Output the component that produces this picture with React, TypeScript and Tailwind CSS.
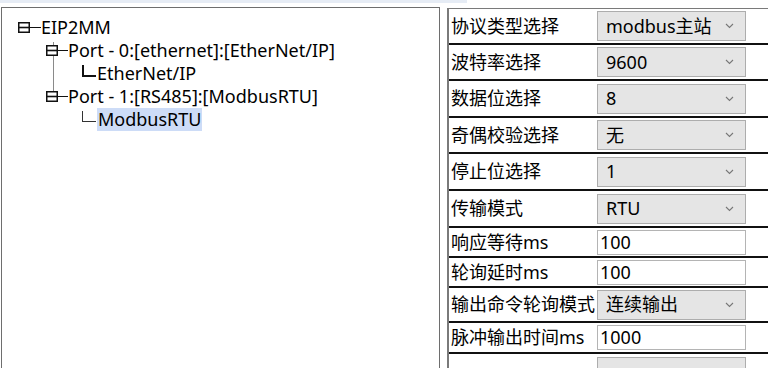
import React from "react";

const font = "font-['Noto_Sans','Noto_Sans_CJK_SC',sans-serif]";

// 树节点前的折叠框
function Box() {
  return (
    <svg width="12" height="11" viewBox="0 0 12 11" className="shrink-0">
      <rect x="0.75" y="0.75" width="10.5" height="9.5" fill="white" stroke="#111" strokeWidth="1.5" />
      <line x1="0" y1="5.5" x2="12" y2="5.5" stroke="#111" strokeWidth="1.6" />
    </svg>
  );
}

function Chevron() {
  return (
    <svg width="9" height="6" viewBox="0 0 9 6" className="shrink-0">
      <path d="M1 1 L4.5 4.5 L8 1" fill="none" stroke="#777" strokeWidth="1.1" />
    </svg>
  );
}

type Row = { label: string; value: string; kind: "combo" | "text"; h: string };

const rows: Row[] = [
  { label: "协议类型选择", value: "modbus主站", kind: "combo", h: "h-[36px]" },
  { label: "波特率选择", value: "9600", kind: "combo", h: "h-[36px]" },
  { label: "数据位选择", value: "8", kind: "combo", h: "h-[37px]" },
  { label: "奇偶校验选择", value: "无", kind: "combo", h: "h-[36px]" },
  { label: "停止位选择", value: "1", kind: "combo", h: "h-[37px]" },
  { label: "传输模式", value: "RTU", kind: "combo", h: "h-[37px]" },
  { label: "响应等待ms", value: "100", kind: "text", h: "h-[30px]" },
  { label: "轮询延时ms", value: "100", kind: "text", h: "h-[30px]" },
  { label: "输出命令轮询模式", value: "连续输出", kind: "combo", h: "h-[35px]" },
  { label: "脉冲输出时间ms", value: "1000", kind: "text", h: "h-[31px]" },
];

export default function App() {
  return (
    <div className={`w-[768px] h-[368px] overflow-hidden bg-white text-black ${font}`}>
      {/* 顶部残留的条 */}
      <div className="h-[7px] flex items-start">
        <div className="w-[467px] h-[3px] bg-[#e6ecf5]" />
      </div>

      <div className="flex h-[361px]">
        {/* 左侧树 */}
        <div className="ml-px w-[439px] h-[400px] border border-[#6e6e6e] bg-white pt-[8px] text-[18px] leading-[23px]">
          <div className="flex items-center pl-[16px] h-[23px]">
            <Box />
            <div className="w-[11px] h-[1.5px] bg-[#111]" />
            <span>EIP2MM</span>
          </div>
          <div className="relative">
            {/* 同级连接竖线 */}
            <div className="absolute left-[51px] top-[3px] w-px h-[55px] bg-[#8a8a8a]" />
            <div className="relative flex items-center pl-[44px] h-[23px]">
              <Box />
              <div className="w-[10px] h-[1.5px] bg-[#111]" />
              <span>Port - 0:[ethernet]:[EtherNet/IP]</span>
            </div>
            <div className="flex items-center pl-[80px] h-[23px]">
              <div className="w-[14px] h-[12px] border-l-2 border-b-2 border-[#111] -mt-[6px] mr-[1px]" />
              <span>EtherNet/IP</span>
            </div>
            <div className="relative flex items-center pl-[44px] h-[23px]">
              <Box />
              <div className="w-[10px] h-[1.5px] bg-[#111]" />
              <span>Port - 1:[RS485]:[ModbusRTU]</span>
            </div>
            <div className="flex items-center pl-[80px] h-[23px]">
              <div className="w-[14px] h-[11px] border-l border-b border-[#333] -mt-[6px] mr-[1px]" />
              <span className="bg-[#cddcf7] px-[1px]">ModbusRTU</span>
            </div>
          </div>
        </div>

        {/* 右侧参数表 */}
        <div className="ml-[7px] mt-px flex-1 border-l-2 border-t border-[#7a7a7a] text-[18px]">
          {rows.map((r) => (
            <div key={r.label} className={`flex items-center border-b-2 border-[#111] ${r.h}`}>
              <div className="w-[148px] pl-[2px] whitespace-nowrap">{r.label}</div>
              {r.kind === "combo" ? (
                <div className="w-[149px] h-[30px] flex items-center justify-between bg-[#e5e5e5] border border-[#adadad] pl-[8px] pr-[11px]">
                  <span>{r.value}</span>
                  <Chevron />
                </div>
              ) : (
                <div className="w-[149px] h-[25px] flex items-center bg-white border border-[#b4b4b4] pl-[2px]">
                  <span>{r.value}</span>
                </div>
              )}
            </div>
          ))}
          <div className="flex items-start h-[20px] pt-[3px]">
            <div className="w-[148px]" />
            <div className="w-[149px] h-[30px] bg-[#e5e5e5] border border-[#adadad]" />
          </div>
        </div>
      </div>
    </div>
  );
}
